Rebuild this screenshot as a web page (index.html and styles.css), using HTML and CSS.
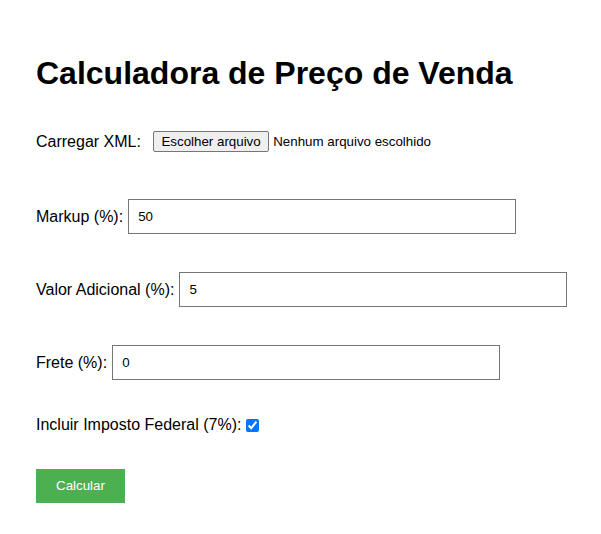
FILE: index.html
```html
<!DOCTYPE html>
<html lang="pt-BR">
<head>
<meta charset="utf-8">
<title>Calculadora de Preço de Venda</title>
<link rel="stylesheet" href="styles.css">
</head>
<body>
<div class="page">
  <h1 class="title">Calculadora de Preço de Venda</h1>
  <form class="form">
    <div class="field field-file">
      <span class="label">Carregar XML:</span>
      <label class="file-btn">Escolher arquivo<input type="file" class="file-input" accept=".xml"></label>
      <span class="file-name">Nenhum arquivo escolhido</span>
    </div>
    <div class="field field-input">
      <label class="label" for="markup">Markup (%):</label>
      <input class="text-input" id="markup" type="number" value="50">
    </div>
    <div class="field field-input">
      <label class="label" for="adicional">Valor Adicional (%):</label>
      <input class="text-input" id="adicional" type="number" value="5">
    </div>
    <div class="field field-input">
      <label class="label" for="frete">Frete (%):</label>
      <input class="text-input" id="frete" type="number" value="0">
    </div>
    <div class="field field-check">
      <label class="label" for="imposto">Incluir Imposto Federal (7%):</label>
      <input class="check" id="imposto" type="checkbox" checked>
    </div>
    <div class="actions">
      <button type="button" class="btn">Calcular</button>
    </div>
  </form>
</div>
</body>
</html>
```

FILE: styles.css
```css
* { box-sizing: border-box; }
html, body {
  margin: 0;
  padding: 0;
  background: #fff;
}
body {
  font-family: "Liberation Sans", Arial, sans-serif;
  font-size: 16px;
  color: #000;
}
.page {
  padding: 55px 36px 20px 36px;
}
.title {
  margin: 0;
  font-size: 32px;
  font-weight: bold;
  line-height: 37px;
}
.form {
  display: flex;
  flex-direction: column;
  align-items: flex-start;
  margin-top: 39px;
}
.field {
  display: flex;
  align-items: center;
  white-space: nowrap;
}
.field > * {
  flex-shrink: 0;
}
.label {
  line-height: 18px;
}
.field-file .label {
  margin-right: 12px;
}
.file-btn {
  position: relative;
  display: inline-block;
  font-family: "Liberation Sans", Arial, sans-serif;
  font-size: 13.333px;
  line-height: 15px;
  padding: 2px 7.5px;
  background: #efefef;
  border: 1px solid #767676;
  border-radius: 2px;
  color: #000;
}
.file-input {
  position: absolute;
  width: 1px;
  height: 1px;
  opacity: 0;
  left: 0;
  top: 0;
}
.file-name {
  font-size: 13.333px;
  margin-left: 4px;
}
.field-input {
  margin-top: 47px;
}
.field-input + .field-input {
  margin-top: 38px;
}
.field-input .label {
  margin-right: 5px;
}
.text-input {
  width: 388px;
  height: 35px;
  padding: 8px 9px;
  border: 1px solid #767676;
  border-radius: 0;
  font-family: "Liberation Sans", Arial, sans-serif;
  font-size: 13.333px;
  color: #000;
  -moz-appearance: textfield;
  appearance: textfield;
}
.text-input::-webkit-outer-spin-button,
.text-input::-webkit-inner-spin-button {
  -webkit-appearance: none;
  margin: 0;
}
.field-check {
  margin-top: 36px;
}
.check {
  margin: 0 0 0 5px;
  width: 13px;
  height: 13px;
}
.actions {
  margin-top: 35px;
}
.btn {
  background: #4CAF50;
  color: #fff;
  border: none;
  padding: 10px 20px;
  font-family: "Liberation Sans", Arial, sans-serif;
  font-size: 13.333px;
  line-height: 14px;
  cursor: pointer;
}
```
